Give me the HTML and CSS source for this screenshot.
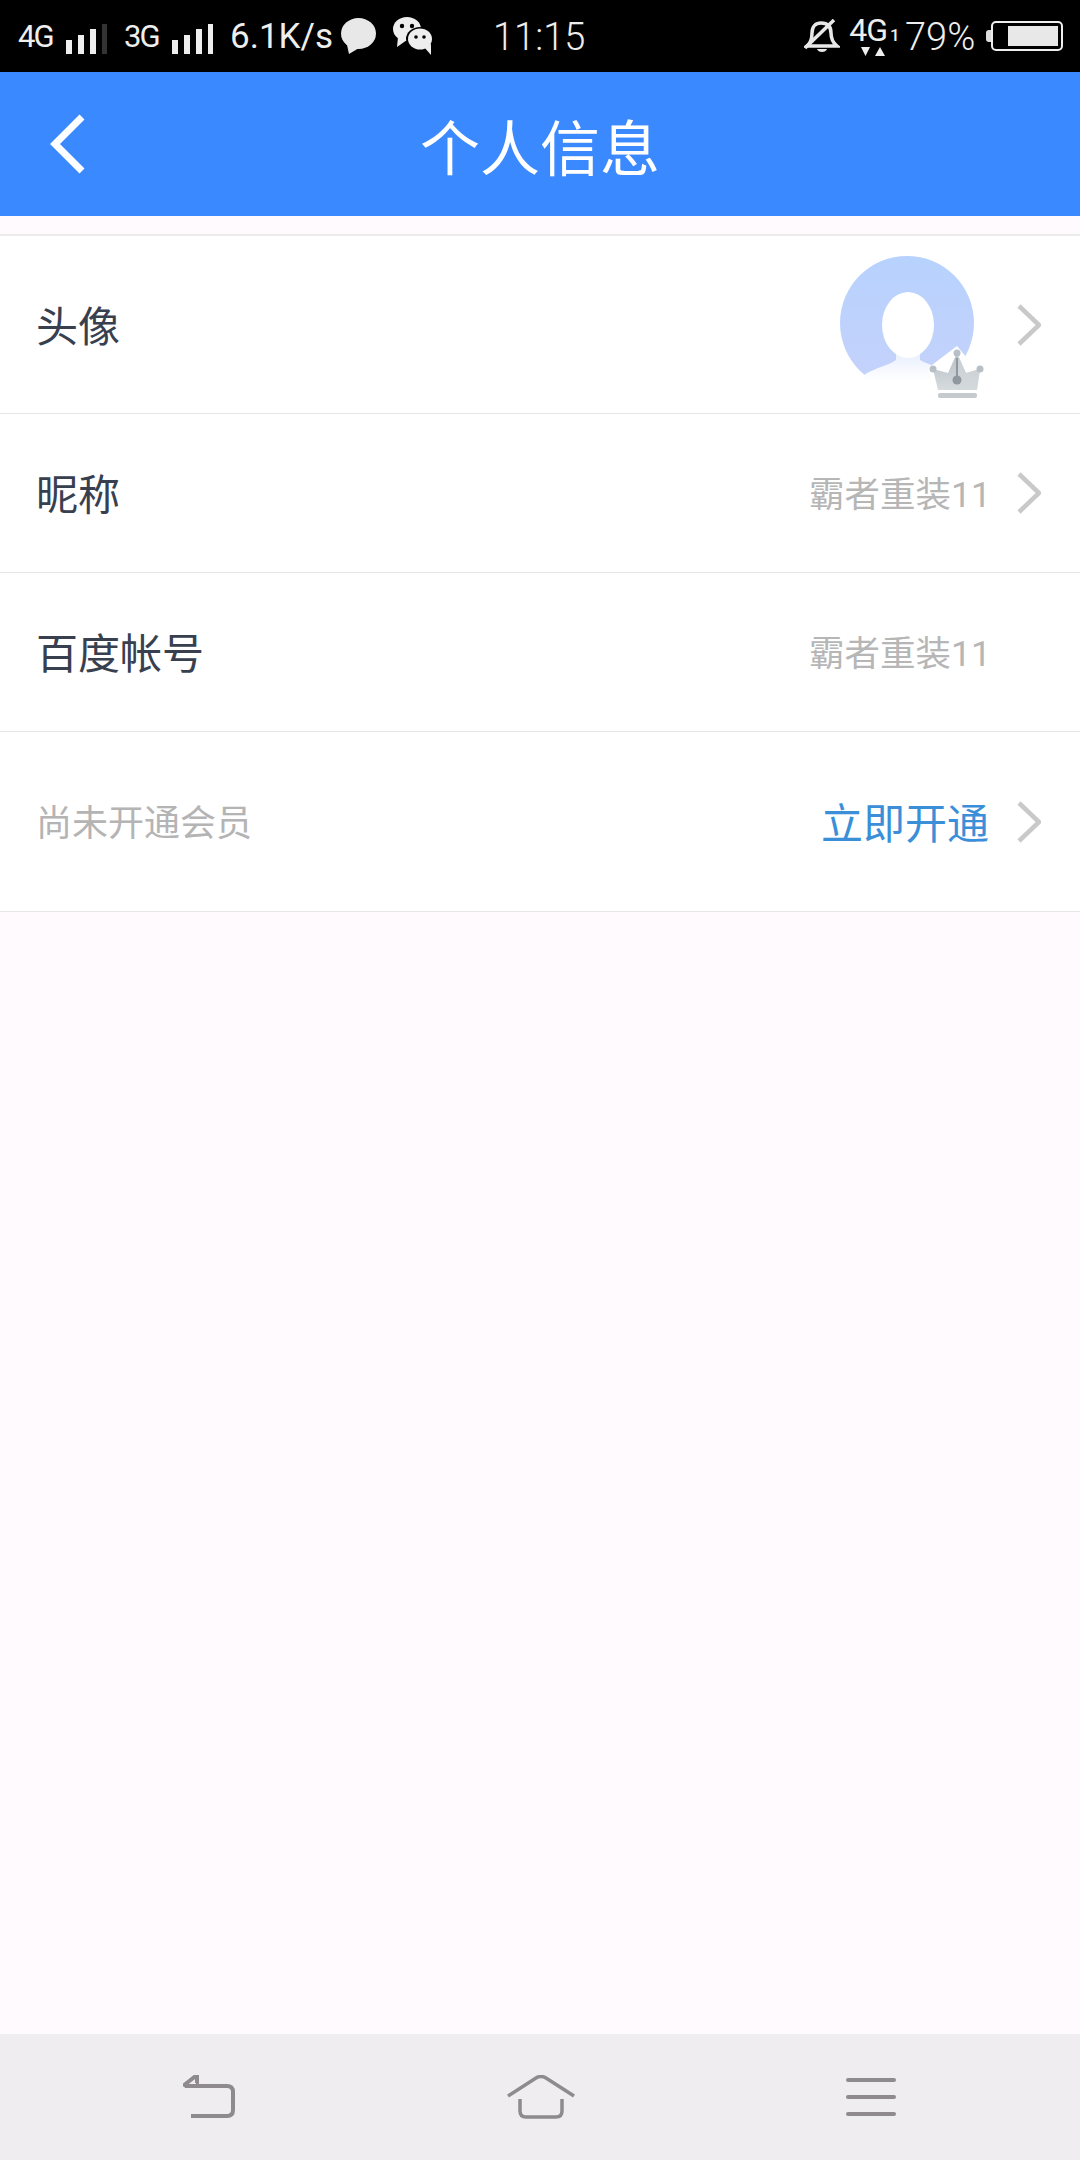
FILE: index.html
```html
<!DOCTYPE html>
<html lang="zh-CN">
<head>
  <meta charset="UTF-8">
  <title>个人信息</title>
<link rel="stylesheet" href="styles.css">
</head>
<body>

<div class="page">
  <div class="status">
    <span class="status_net">4G</span>
    <svg class="status_bars" width="41" height="30" viewBox="0 0 41 30">
      <rect x="0" y="16" width="6" height="14" fill="#eee"/>
      <rect x="12" y="11" width="6" height="19" fill="#eee"/>
      <rect x="24" y="5" width="6" height="25" fill="#eee"/>
      <rect x="36" y="0" width="5" height="30" fill="#333"/>
    </svg>
    <span class="status_net status_net-second">3G</span>
    <svg class="status_bars" width="41" height="30" viewBox="0 0 41 30">
      <rect x="0" y="16" width="6" height="14" fill="#eee"/>
      <rect x="12" y="11" width="6" height="19" fill="#eee"/>
      <rect x="24" y="5" width="6" height="25" fill="#eee"/>
      <rect x="36" y="0" width="5" height="30" fill="#eee"/>
    </svg>
    <span class="status_speed">6.1K/s</span>
    <svg class="status_msg" width="35" height="36" viewBox="0 0 35 36">
      <ellipse cx="17.500" cy="15.500" rx="17.500" ry="15.500" fill="#e8e8e8"/>
      <path d="M6 27 L8 36 L18 30 Z" fill="#e8e8e8"/>
    </svg>
    <svg class="status_wechat" width="41" height="38" viewBox="0 0 41 38">
      <ellipse cx="14" cy="12" rx="14" ry="12" fill="#eee"/>
      <path d="M5 20 L4 30 L14 23 Z" fill="#eee"/>
      <ellipse cx="27" cy="22" rx="14" ry="12" fill="#000"/>
      <ellipse cx="27" cy="22" rx="12" ry="10.500" fill="#eee"/>
      <path d="M31 30 L38 38 L38 27 Z" fill="#eee"/>
      <circle cx="9" cy="9" r="2.200" fill="#000"/>
      <circle cx="19" cy="9" r="2.200" fill="#000"/>
      <circle cx="23" cy="20" r="1.800" fill="#000"/>
      <circle cx="31" cy="20" r="1.800" fill="#000"/>
    </svg>
    <span class="status_time">11:15</span>
    <svg class="status_bell" width="36" height="34" viewBox="0 0 36 34">
      <path d="M3 27 C8 23 8 18 8 14 C8 7 12 4 17 4 C23 4 27 7 27 14 C27 18 28 23 33 27 Z" fill="none" stroke="#e8e8e8" stroke-width="3.500"/>
      <path d="M13 30 H23 C22 34 14 34 13 30 Z" fill="#e8e8e8"/>
      <path d="M1 29 L30 1" stroke="#e8e8e8" stroke-width="3.500"/>
    </svg>
    <div class="status_data">
      <span class="status_data_net">4G<small class="status_data_sim">1</small></span>
      <svg class="status_data_arrows" width="24" height="9" viewBox="0 0 24 9">
        <path d="M0 0 H9 L4.500 9 Z M14 9 H24 L19 0 Z" fill="#eee"/>
      </svg>
    </div>
    <span class="status_battery_text">79%</span>
    <div class="battery">
      <div class="battery_nub"></div>
      <div class="battery_body"><div class="battery_fill"></div></div>
    </div>
  </div>

  <div class="header">
    <svg class="header_back" width="38" height="62" viewBox="0 0 38 62">
      <path d="M33 4 L6 31 L33 58" fill="none" stroke="#fff" stroke-width="7"/>
    </svg>
    <h1 class="header_title">个人信息</h1>
  </div>

  <div class="list">
    <div class="row row-avatar">
      <span class="row_label">头像</span>
      <div class="avatar">
        <svg width="146" height="146" viewBox="0 0 146 146">
          <defs>
            <linearGradient id="avatarBg" x1="0" y1="0" x2="0" y2="1">
              <stop offset="0" stop-color="#b7d2fe"/>
              <stop offset="1" stop-color="#c5d2fb"/>
            </linearGradient>
            <linearGradient id="avatarBody" x1="0" y1="0" x2="0" y2="1">
              <stop offset="0" stop-color="#e6edfd"/>
              <stop offset="0.600" stop-color="#fff"/>
            </linearGradient>
            <linearGradient id="crown" x1="0" y1="0" x2="0" y2="1">
              <stop offset="0" stop-color="#b6c0c6"/>
              <stop offset="1" stop-color="#d6dbde"/>
            </linearGradient>
          </defs>
          <circle cx="67" cy="67" r="67" fill="url(#avatarBg)"/>
          <path d="M24 119 C36 111 48 110 56 104 L56 94 L80 94 L80 104 C90 110 100 110 112 119 L124 146 L14 146 Z" fill="url(#avatarBody)"/>
          <ellipse cx="68" cy="69" rx="26" ry="33" fill="#fff"/>
          <path d="M88 112 L96 146 L142 146 L146 110 L132 108 L117 90 Z" fill="#fff"/>
          <path d="M98 134 L93 113 L108 117 L117 97 L126 117 L140 113 L137 134 Z" fill="url(#crown)"/>
          <path d="M117 97 L126 117 L140 113 L137 134 L117 134 Z" fill="#d2d7da" opacity="0.600"/>
          <circle cx="93" cy="113" r="3.500" fill="#b6c0c6"/>
          <circle cx="117" cy="97" r="3.500" fill="#b6c0c6"/>
          <circle cx="140" cy="113" r="3.500" fill="#b6c0c6"/>
          <circle cx="117" cy="124" r="4.500" fill="#8f989e"/>
          <rect x="116" y="102" width="2" height="18" fill="#8f989e"/>
          <rect x="98" y="137" width="39" height="5" rx="2" fill="#c4cace"/>
        </svg>
      </div>
      <svg class="row_arrow" width="24" height="42" viewBox="0 0 24 42"><path d="M2 2 L22 21 L2 40" fill="none" stroke="#c9c9c9" stroke-width="4.500"/></svg>
    </div>
    <div class="row">
      <span class="row_label">昵称</span>
      <span class="row_value">霸者重装11</span>
      <svg class="row_arrow" width="24" height="42" viewBox="0 0 24 42"><path d="M2 2 L22 21 L2 40" fill="none" stroke="#c9c9c9" stroke-width="4.500"/></svg>
    </div>
    <div class="row">
      <span class="row_label">百度帐号</span>
      <span class="row_value">霸者重装11</span>
      <div class="row_arrow"></div>
    </div>
    <div class="row row-vip">
      <span class="row_label row_label-muted">尚未开通会员</span>
      <span class="row_link">立即开通</span>
      <svg class="row_arrow" width="24" height="42" viewBox="0 0 24 42"><path d="M2 2 L22 21 L2 40" fill="none" stroke="#c9c9c9" stroke-width="4.500"/></svg>
    </div>
  </div>

  <div class="filler"></div>

  <div class="nav">
    <svg width="52" height="44" viewBox="0 0 52 44">
      <path d="M0 11 L14 0 V8 H13 M2 11 H44 Q50 11 50 17 V35 Q50 41 44 41 H8" fill="none" stroke="#8e8a8e" stroke-width="4" stroke-linejoin="round"/>
    </svg>
    <svg width="70" height="44" viewBox="0 0 70 44">
      <path d="M2 21 L30 3 Q35 0 40 3 L68 21" fill="none" stroke="#8e8a8e" stroke-width="3.500"/>
      <path d="M14 24 V36 Q14 42 20 42 H50 Q56 42 56 36 V24" fill="none" stroke="#8e8a8e" stroke-width="3.500"/>
    </svg>
    <svg width="50" height="38" viewBox="0 0 50 38">
      <rect y="0" width="50" height="4" rx="2" fill="#8e8a8e"/>
      <rect y="17" width="50" height="4" rx="2" fill="#8e8a8e"/>
      <rect y="34" width="50" height="4" rx="2" fill="#8e8a8e"/>
    </svg>
  </div>
</div>

</body>
</html>
```

FILE: styles.css
```css
html, body {
  margin: 0;
  padding: 0;
}
.page {
  display: flex;
  flex-direction: column;
  width: 1080px;
  height: 2160px;
  overflow: hidden;
  background-color: #fefafe;
  font-family: "Roboto", "Noto Sans CJK SC", sans-serif;
}

.status {
  display: flex;
  align-items: center;
  flex: none;
  height: 72px;
  padding-left: 18px;
  background-color: #000;
  color: #eee;
  font-family: "Roboto", "Liberation Sans", sans-serif;
}
.status span {
  flex: none;
  white-space: nowrap;
}
.status svg {
  flex: none;
}
.status_net {
  width: 37px;
  font-size: 31px;
  letter-spacing: -2px;
}
.status_net-second {
  margin-left: 17px;
}
.status_bars {
  margin-left: 11px;
  margin-top: 6px;
}
.status_speed {
  margin-left: 17px;
  width: 103px;
  font-size: 35px;
}
.status_msg {
  margin-left: 8px;
}
.status_wechat {
  margin-left: 17px;
}
.status_time {
  margin-left: 59px;
  margin-top: 2px;
  width: 94px;
  font-size: 38px;
  font-weight: 300;
}
.status_bell {
  margin-left: 217px;
}
.status_data {
  display: flex;
  flex-direction: column;
  align-items: center;
  flex: none;
  width: 46px;
  margin-left: 11px;
}
.status_data_net {
  height: 26px;
  font-size: 32px;
  line-height: 26px;
  letter-spacing: -1px;
}
.status_data_sim {
  font-size: 17px;
  font-weight: 500;
  margin-left: 3px;
}
.status_data_arrows {
  margin-top: 4px;
  margin-right: 2px;
}
.status_battery_text {
  margin-left: 8px;
  margin-top: 2px;
  width: 71px;
  font-size: 38px;
  font-weight: 300;
}
.battery {
  display: flex;
  align-items: center;
  flex: none;
  margin-left: 10px;
}
.battery_nub {
  width: 5px;
  height: 12px;
  background-color: #ddd;
  border-radius: 3px 0 0 3px;
}
.battery_body {
  box-sizing: border-box;
  width: 72px;
  height: 30px;
  padding: 3px 3px 3px 15px;
  border: 2px solid #eee;
  border-radius: 5px;
}
.battery_fill {
  height: 100%;
  background-color: #e8e8e8;
}

.header {
  display: flex;
  align-items: center;
  position: relative;
  flex: none;
  height: 144px;
  background-color: #3b89fe;
}
.header_back {
  margin-left: 49px;
  flex: none;
}
.header_title {
  position: absolute;
  left: 0;
  right: 0;
  margin: 0;
  color: #fff;
  font-size: 60px;
  font-weight: 400;
  text-align: center;
}

.list {
  flex: none;
  margin-top: 18px;
  background-color: #fff;
  border-top: 2px solid #ececec;
}
.row {
  box-sizing: border-box;
  display: flex;
  align-items: center;
  height: 159px;
  padding: 0 39px 0 36px;
  border-bottom: 1px solid #e6e6e6;
}
.row-avatar {
  height: 178px;
}
.row-vip {
  height: 180px;
}
.row_label {
  margin-right: auto;
  margin-bottom: 3px;
  color: #38404f;
  font-size: 42px;
}
.row_label-muted {
  color: #b4b4b4;
  font-size: 36px;
}
.row_value {
  margin-bottom: 3px;
  margin-right: -2px;
  color: #b6b6b6;
  font-size: 35.500px;
}
.row_link {
  margin-bottom: 2px;
  color: #3b8fd8;
  font-size: 42px;
}
.row_arrow {
  flex: none;
  width: 24px;
  margin-left: 28px;
}
.avatar {
  width: 146px;
  height: 146px;
  margin-top: 8px;
  margin-right: 3px;
}

.filler {
  flex: 1;
}

.nav {
  display: flex;
  align-items: center;
  justify-content: space-between;
  flex: none;
  height: 126px;
  padding: 0 184px 0 183px;
  background-color: #efedf0;
}
```
